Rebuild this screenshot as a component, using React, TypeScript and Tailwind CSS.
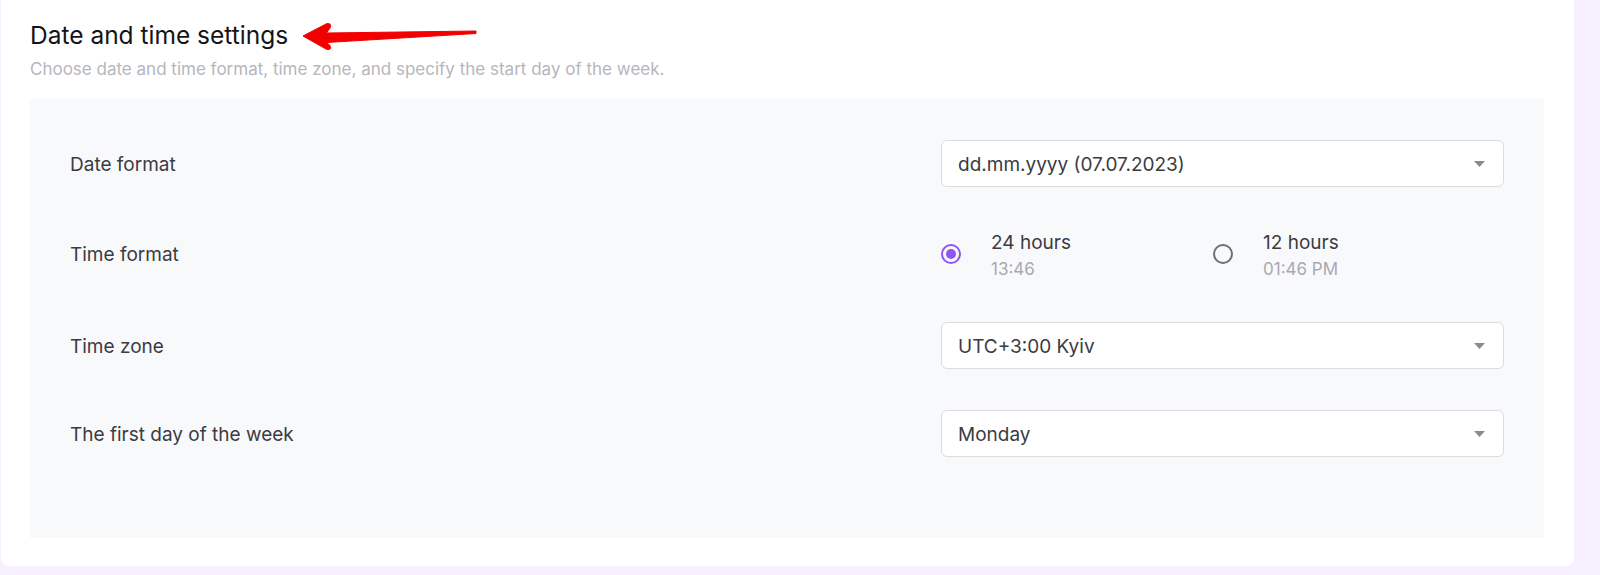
import React from "react";

const font = { fontFamily: "Inter, 'Noto Sans', sans-serif" };

function Caret() {
  return (
    <svg width="11" height="6" viewBox="0 0 11 6" className="shrink-0">
      <path d="M0 0 L11 0 L5.5 6 Z" fill="#8a8a90" />
    </svg>
  );
}

function Select({ value }: { value: string }) {
  return (
    <div className="flex h-[47px] w-full items-center justify-between rounded-[6px] border border-[#dcdce0] bg-white pl-[16px] pr-[18px]">
      <span className="pt-[3px] text-[19px] text-[#3b3b42]">{value}</span>
      <Caret />
    </div>
  );
}

function Radio({ checked, title, sub }: { checked: boolean; title: string; sub: string }) {
  return (
    <div className="flex items-center gap-[30px]">
      {checked ? (
        <div className="flex h-[20px] w-[20px] shrink-0 items-center justify-center rounded-full border-2 border-[#9155f6]">
          <div className="h-[10px] w-[10px] rounded-full bg-[#9155f6]" />
        </div>
      ) : (
        <div className="h-[20px] w-[20px] shrink-0 rounded-full border-2 border-[#6e6e73]" />
      )}
      <div className="flex flex-col pt-[5px]">
        <span className="text-[19px] leading-[26px] text-[#3b3b42]">{title}</span>
        <span className="text-[17px] leading-[26px] text-[#a9a9b0]">{sub}</span>
      </div>
    </div>
  );
}

function Row({ label, className, children }: { label: string; className?: string; children: React.ReactNode }) {
  return (
    <div className={"flex h-[47px] items-center " + (className ?? "")}>
      <div className="flex-1 pt-[3px] text-[19px] text-[#3b3b42]">{label}</div>
      <div className="w-[563px]">{children}</div>
    </div>
  );
}

export default function App() {
  return (
    <div style={font} className="h-[575px] w-[1600px] bg-[#f6f0ff] pb-[9px] pl-[1px] pr-[26px]">
      <div className="flex h-full flex-col rounded-b-[8px] bg-white pl-[29px] pr-[30px] pt-[18px]">
        <div className="flex items-center">
          <h1 className="text-[24.5px] leading-[34px] text-[#141418]">Date and time settings</h1>
          <svg width="178" height="30" viewBox="0 0 178 30" className="ml-[12px] mt-[2px]">
            <path
              d="M3 15 L26 3 C29.5 1.5 32 4 30 7 L26.5 12 L176 10 L176 12.5 L26.5 21.5 L30 24.5 C32 28 29 29.5 26 28 Z"
              fill="#f20000"
              stroke="#f20000"
              strokeWidth="1"
              strokeLinejoin="round"
            />
          </svg>
        </div>
        <p className="mt-[5px] text-[17px] leading-[24px] text-[#b6b6bd]">
          Choose date and time format, time zone, and specify the start day of the week.
        </p>
        <div className="mt-[18px] flex h-[439px] flex-col bg-[#f8f9fb] px-10 pt-[41px]">
          <Row label="Date format">
            <Select value="dd.mm.yyyy (07.07.2023)" />
          </Row>
          <Row label="Time format" className="mt-[43px]">
            <div className="flex items-center">
              <div className="w-[272px]">
                <Radio checked title="24 hours" sub="13:46" />
              </div>
              <Radio checked={false} title="12 hours" sub="01:46 PM" />
            </div>
          </Row>
          <Row label="Time zone" className="mt-[45px]">
            <Select value="UTC+3:00 Kyiv" />
          </Row>
          <Row label="The first day of the week" className="mt-[41px]">
            <Select value="Monday" />
          </Row>
        </div>
      </div>
    </div>
  );
}
